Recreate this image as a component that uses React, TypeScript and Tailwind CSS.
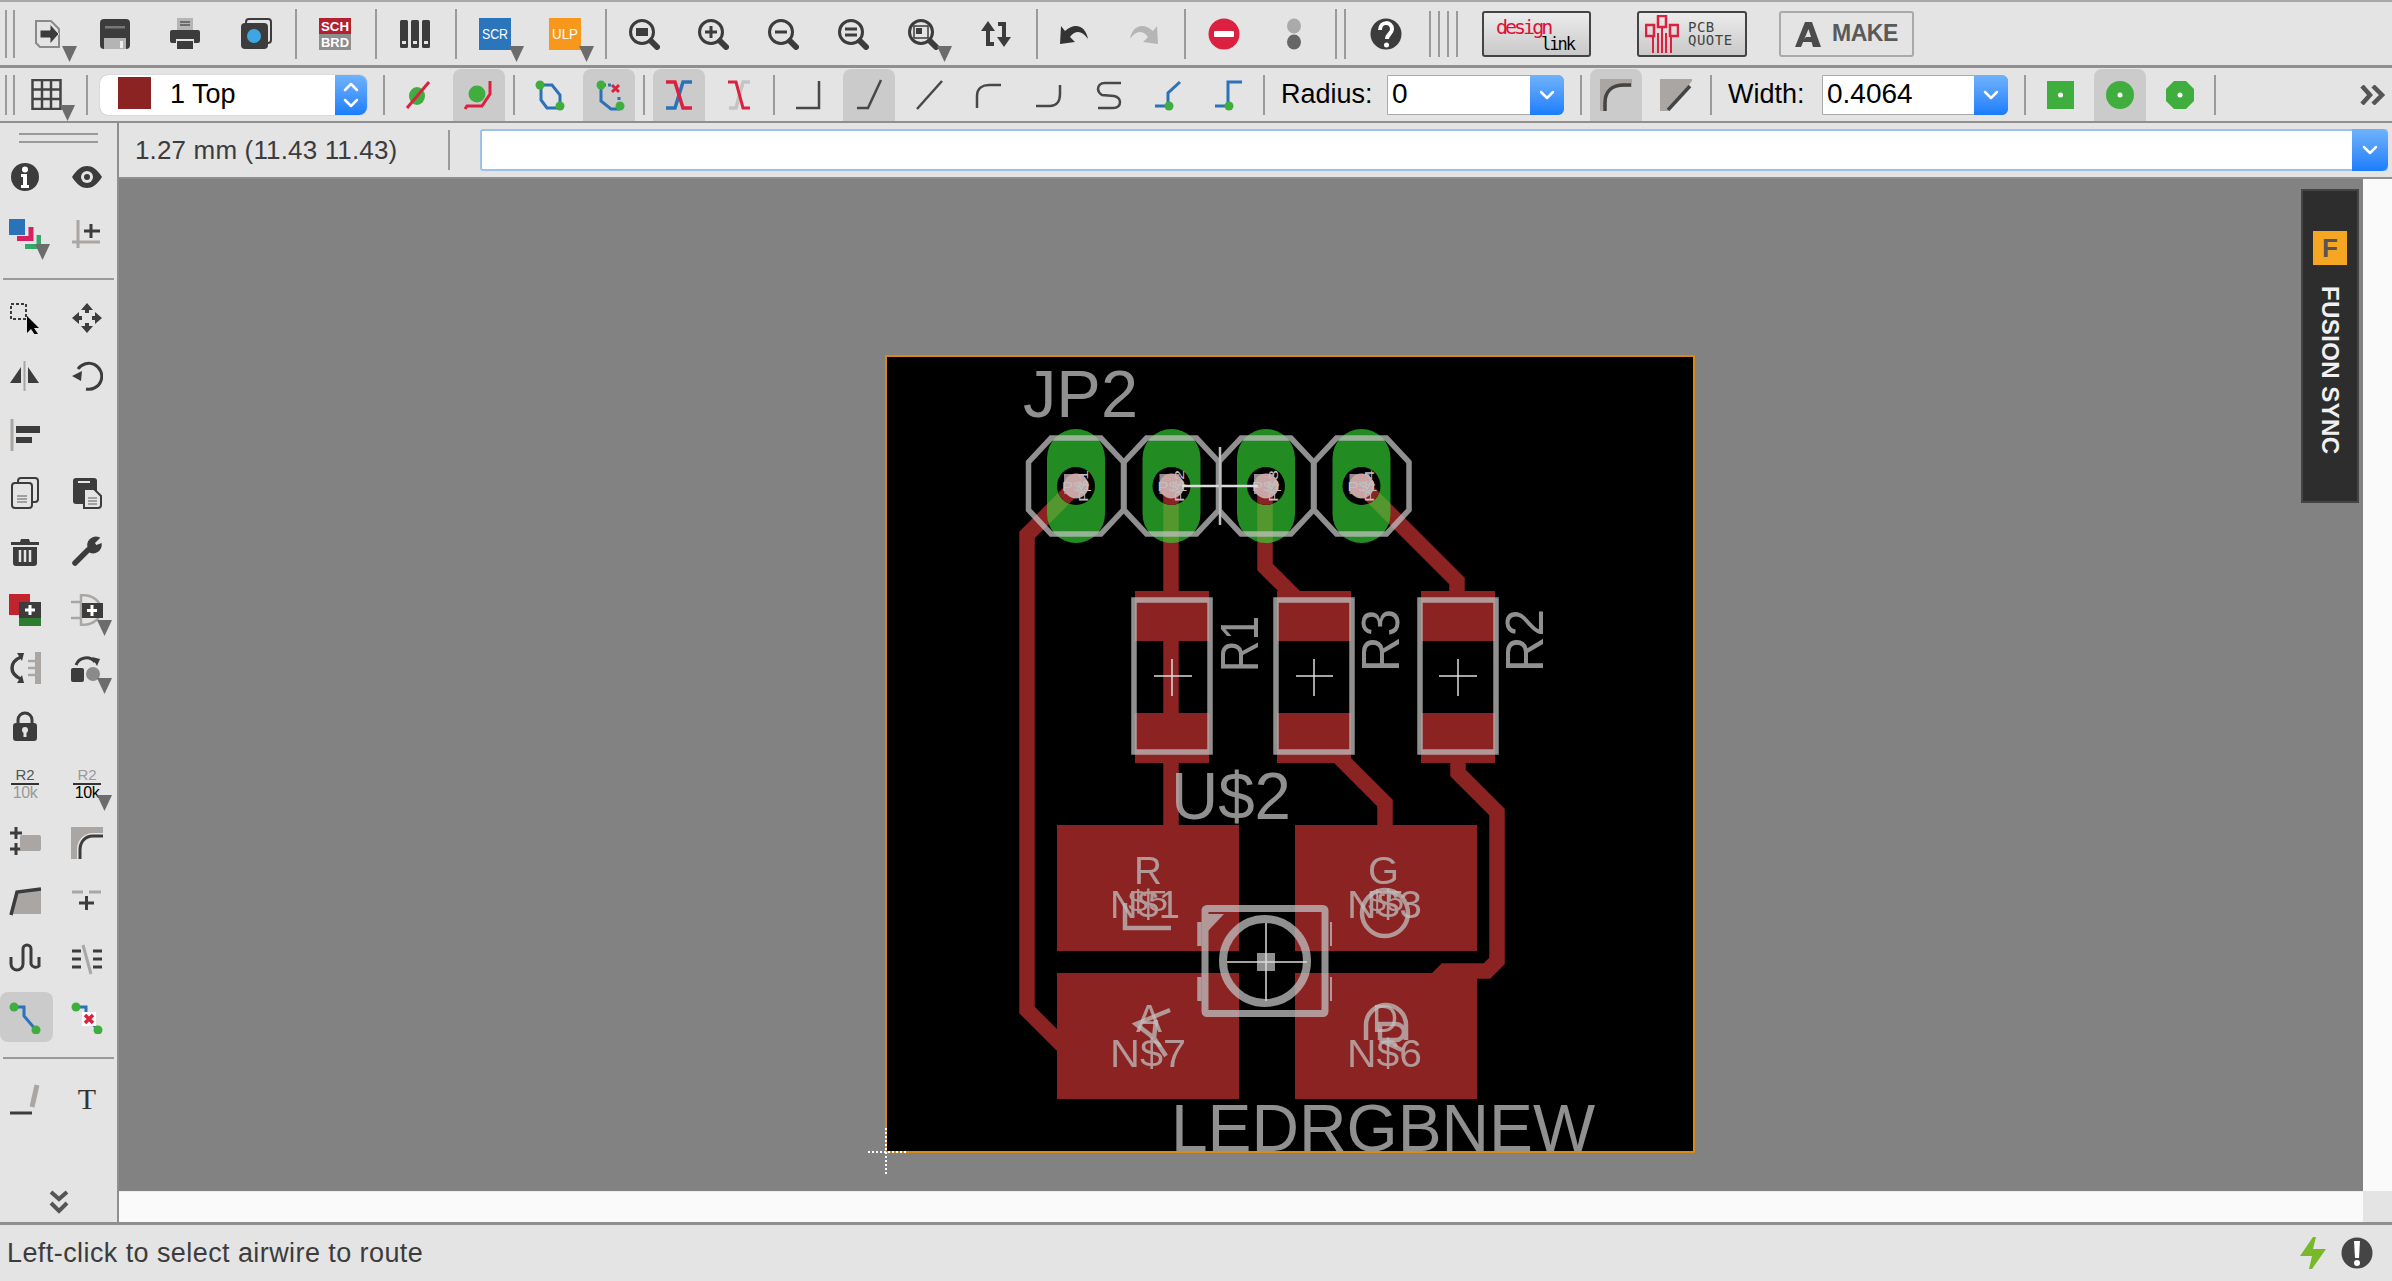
import type { ReactNode } from "react";

const DARK = "#3c3c3c";
const LIGHT = "#aaa6a4";
const BLUE = "#2b73b9";
const RED = "#dc2140";
const GREEN = "#3fae3f";

function Ico({ children, size = 32 }: { children: ReactNode; size?: number }) {
  return (
    <svg width={size} height={size} viewBox="0 0 32 32" fill="none" className="block">
      {children}
    </svg>
  );
}

function Tri({ className = "left-1/2 ml-[14px] bottom-[3px]" }: { className?: string }) {
  return (
    <svg width="15" height="16" viewBox="0 0 15 16" className={`absolute ${className}`}>
      <path d="M0 0h15L7.5 16z" fill="#6c6c6c" />
    </svg>
  );
}

function Sep({ className = "ml-[5px] mr-[3px]" }: { className?: string }) {
  return <div className={`w-[2px] h-[50px] bg-[#9a9a9a] shrink-0 ${className}`} />;
}

function Sep2() {
  return <div className="w-[2px] h-[40px] bg-[#9a9a9a] shrink-0" />;
}

function Top({ w, children, drop }: { w: string; children: ReactNode; drop?: boolean }) {
  return (
    <div className={`relative h-full flex items-center justify-center shrink-0 ${w}`}>
      {children}
      {drop && <Tri />}
    </div>
  );
}

function Btn({ on, children }: { on?: boolean; children: ReactNode }) {
  return (
    <div className={`w-[52px] h-[52px] self-end rounded-t-lg flex items-center justify-center shrink-0 ${on ? "bg-[#cbcbcb]" : ""}`}>
      {children}
    </div>
  );
}

function Lens({ children }: { children?: ReactNode }) {
  return (
    <Ico>
      <circle cx="14" cy="14" r="11.5" stroke={DARK} strokeWidth="3" />
      <path d="M23 23l6 6" stroke={DARK} strokeWidth="6" strokeLinecap="round" />
      {children}
    </Ico>
  );
}

function Chevron({ up }: { up?: boolean }) {
  return (
    <svg width="16" height="10" viewBox="0 0 16 10" fill="none">
      <path d={up ? "M2 8l6-6 6 6" : "M2 2l6 6 6-6"} stroke="#fff" strokeWidth="2.5" strokeLinecap="round" strokeLinejoin="round" />
    </svg>
  );
}

function Route({ d, c = BLUE, dots, children }: { d: string; c?: string; dots?: [number, number][]; children?: ReactNode }) {
  return (
    <Ico>
      <path d={d} stroke={c} strokeWidth="3" strokeLinejoin="miter" />
      {children}
      {dots?.map(([x, y]) => <circle key={`${x}-${y}`} cx={x} cy={y} r="4.5" fill={GREEN} />)}
    </Ico>
  );
}

function Wire({ d, c = "#484848" }: { d: string; c?: string }) {
  return (
    <Ico>
      <path d={d} stroke={c} strokeWidth="2.5" />
    </Ico>
  );
}

function Combo({ w, value, btn = "w-[34px]" }: { w: string; value: string; btn?: string }) {
  return (
    <div className={`${w} h-[40px] flex bg-white border border-[#aaaaaa] rounded-r-md shrink-0`}>
      <div className="flex-1 pl-[4px] text-[28px] leading-[36px] text-black">{value}</div>
      <div className={`${btn} -my-px -mr-px rounded-r-md bg-gradient-to-b from-[#6fb2fb] to-[#187dfb] flex items-center justify-center`}>
        <Chevron />
      </div>
    </div>
  );
}

const leftRows: [ReactNode, ReactNode][] = [
  [
    <Ico><path d="M16 2h0a14 14 0 1 1 0 28 14 14 0 0 1 0-28z" fill={DARK} /><circle cx="16" cy="8.5" r="3" fill="#fff" /><path d="M12 13h6v11h2v3h-8v-3h2v-8h-2z" fill="#fff" /></Ico>,
    <Ico><path d="M1 16C6 8 11 5 16 5s10 3 15 11c-5 8-10 11-15 11S6 24 1 16z" fill={DARK} /><circle cx="16" cy="16" r="6" fill="#e4e4e4" /><circle cx="16" cy="16" r="3" fill={DARK} /></Ico>,
  ],
  [
    <Ico><rect x="0" y="0" width="16" height="16" fill={BLUE} /><path d="M8 19.500h14V8" stroke="#d6205f" strokeWidth="5" /><path d="M16 27.500h14V16" stroke="#35a96a" strokeWidth="5" /></Ico>,
    <Ico><path d="M7 1v28M1 23h28" stroke={LIGHT} strokeWidth="3" /><path d="M13 13h16M20 6v14" stroke={DARK} strokeWidth="3" transform="translate(0 -1)" /></Ico>,
  ],
];

const toolRows: [ReactNode, ReactNode, boolean?, boolean?][] = [
  [
    <Ico><rect x="2" y="2" width="15" height="15" stroke={DARK} strokeWidth="2" strokeDasharray="3 2" /><path d="M18 14v17l4-4 4 6 3-1-4-6h5z" fill="#000" /></Ico>,
    <Ico><path d="M16 1l6 7h-4v3h-4V8h-4zM16 31l6-7h-4v-3h-4v3h-4zM1 16l7-6v4h3v4H8v4zM31 16l-7-6v4h-3v4h3v4z" fill={DARK} /></Ico>,
  ],
  [
    <Ico><path d="M15.5 1v30" stroke={LIGHT} strokeWidth="2" /><path d="M12 7v16H1zM19 7v16h11z" fill={DARK} /></Ico>,
    <Ico><path d="M7 9a13 13 0 1 1 8 20" stroke={DARK} strokeWidth="3" /><path d="M1 16l10-5-1 10z" fill={DARK} /></Ico>,
  ],
  [
    <Ico><path d="M3 0v32" stroke={LIGHT} strokeWidth="3" /><rect x="7" y="7" width="24" height="7" fill={DARK} /><rect x="7" y="18" width="16" height="6" fill={DARK} /></Ico>,
    <div />,
  ],
  [
    <Ico><rect x="9" y="1" width="20" height="24" rx="3" fill="#e4e4e4" stroke={DARK} strokeWidth="2" /><rect x="3" y="6" width="20" height="25" rx="3" fill="#e4e4e4" stroke={DARK} strokeWidth="2" /><path d="M8 19h10M8 22h10M8 25h10" stroke="#8a8a8a" strokeWidth="1.5" /></Ico>,
    <Ico><rect x="2" y="1" width="24" height="26" rx="3" fill={DARK} /><rect x="7" y="4" width="12" height="2" fill="#e4e4e4" /><path d="M13 12h10l7 7v9a3 3 0 0 1-3 3H13z" fill="#e4e4e4" stroke={DARK} strokeWidth="2" /><path d="M17 21h9M17 24h9M17 27h9" stroke="#8a8a8a" strokeWidth="1.5" /></Ico>,
  ],
  [
    <Ico><path d="M2 7h9l1-3h8l1 3h9v3H2z" fill={DARK} /><path d="M4 12h24v16a3 3 0 0 1-3 3H7a3 3 0 0 1-3-3z" fill={DARK} /><path d="M11 15v12M16 15v12M21 15v12" stroke="#e4e4e4" strokeWidth="2.5" /></Ico>,
    <Ico><path d="M4 28L17 15" stroke={DARK} strokeWidth="5.5" strokeLinecap="round" /><path d="M17 11a8 8 0 0 1 11-8l-5 5 2 3 5-2a8 8 0 0 1-11 8z" fill={DARK} stroke={DARK} strokeWidth="1.5" /></Ico>,
  ],
  [
    <Ico><rect x="0" y="0" width="21" height="21" fill="#c0242f" /><rect x="10" y="8" width="22" height="16" fill={DARK} /><rect x="10" y="24" width="22" height="8" fill="#2e7d2e" /><path d="M21 11v10M16 16h10" stroke="#fff" strokeWidth="3" /></Ico>,
    <Ico><path d="M10 1c13 0 20 7 20 15s-7 15-20 15zM0 8h10M0 24h10" stroke={LIGHT} strokeWidth="2.5" /><rect x="11" y="9" width="21" height="15" fill={DARK} /><path d="M21 11v11M16 16.500h10" stroke="#fff" strokeWidth="3" /></Ico>,
    false,
    true,
  ],
  [
    <Ico><path d="M29 0v32" stroke={LIGHT} strokeWidth="6" /><path d="M19 9h8M19 16h8M19 23h8" stroke={LIGHT} strokeWidth="2.5" /><path d="M12 5C5 8 3 12 3 16s2 8 9 11" stroke={DARK} strokeWidth="3.5" /><path d="M8 1h7l-2 8zM8 31h7l-2-8z" fill={DARK} /></Ico>,
    <Ico><rect x="0" y="16" width="13" height="14" rx="2" fill={DARK} /><circle cx="22" cy="22" r="7" fill="#8a8a8a" /><path d="M5 13a11 11 0 0 1 19-3" stroke={DARK} strokeWidth="3" /><path d="M21 5l8 2-3 7z" fill={DARK} /></Ico>,
    false,
    true,
  ],
  [
    <Ico><path d="M9 14V10a7 7 0 0 1 14 0v4" stroke={DARK} strokeWidth="3" /><rect x="4" y="13" width="24" height="18" rx="3" fill={DARK} /><circle cx="16" cy="20" r="3" fill="#e4e4e4" /><rect x="14.500" y="20" width="3" height="7" fill="#e4e4e4" /></Ico>,
    <div />,
  ],
  [
    <div className="w-[34px] text-center"><div className="mx-[3px] pb-[1px] text-[15px] leading-[14px] text-[#555]">R2</div><div className="mx-[3px] border-t-2 border-[#333] text-[16px] leading-[16px] tracking-[-0.5px] whitespace-nowrap text-[#999]"><span className="-mx-1">10k</span></div></div>,
    <div className="w-[34px] text-center"><div className="mx-[3px] pb-[1px] text-[15px] leading-[14px] text-[#999]">R2</div><div className="mx-[3px] border-t-2 border-[#333] text-[16px] leading-[16px] tracking-[-0.5px] whitespace-nowrap text-black"><span className="-mx-1">10k</span></div></div>,
    false,
    true,
  ],
  [
    <Ico><path d="M9 3v12M3 9h12M9 19v12M3 25h12" stroke={DARK} strokeWidth="3" transform="translate(-2 -3)" /><rect x="11" y="8" width="21" height="16" rx="2" fill={LIGHT} /></Ico>,
    <Ico><path d="M0 0h32v6H22C12 6 6 14 6 22v10H0z" fill={LIGHT} /><path d="M9 32v-9c0-8 5-14 13-14h10" stroke={DARK} strokeWidth="3" /></Ico>,
  ],
  [
    <Ico><path d="M8 6l24-3v26H4z" fill={LIGHT} /><path d="M2 30L8 7l24-3" stroke={DARK} strokeWidth="3.5" /></Ico>,
    <Ico><path d="M1 7h11M18 7h12" stroke={LIGHT} strokeWidth="3" /><path d="M15.500 11v14M8 18h15" stroke={DARK} strokeWidth="3" /></Ico>,
  ],
  [
    <Ico><path d="M2 14v7a6 6 0 0 0 12 0V6a4 4 0 0 1 8 0v15a5 5 0 0 0 8 2v-9" stroke={DARK} strokeWidth="3" /></Ico>,
    <Ico><path d="M1 8h9M1 16h9M1 24h9M22 8h9M22 16h9M22 24h9" stroke={DARK} strokeWidth="3" /><path d="M12 2l8 29" stroke={LIGHT} strokeWidth="3" /></Ico>,
  ],
  [
    <Route d="M5 5h10v9l12 14" dots={[[5, 5], [27, 28]]} />,
    <Route d="M5 5h10v9l12 14" dots={[[5, 5], [27, 28]]}><rect x="11" y="10" width="14" height="14" fill="#fff" /><path d="M14 13l8 8M22 13l-8 8" stroke={RED} strokeWidth="3.500" /></Route>,
    true,
  ],
];

function Board() {
  const gray = "#c0c0c0";
  const pads = [1076, 1171.5, 1266, 1361.5];
  const cy = 486;
  const traces = [
    "M1076 486L1027 535V1010L1062 1045",
    "M1171 486V825",
    "M1265 486V567L1300 602",
    "M1362 486L1457 581V600",
    "M1315 733L1385 803V830",
    "M1458 755V773L1497 812V961L1487 971H1445L1420 996",
  ];
  return (
    <svg width="850" height="850" viewBox="866 340 850 850" className="absolute left-[747px] top-[161px]">
      <defs>
        {pads.map((x, i) => (
          <clipPath key={x} id={`hole${i}`}>
            <circle cx={x} cy={cy} r="19" />
          </clipPath>
        ))}
      </defs>
      <rect x="886" y="356" width="808" height="796" fill="#000" />
      <g fill="#8b2323">
        {traces.map((d) => <path key={d} d={d} fill="none" stroke="#8b2323" strokeWidth="15.5" />)}
        <rect x="1135" y="591" width="74" height="50" />
        <rect x="1135" y="713" width="74" height="50" />
        <rect x="1277" y="591" width="74" height="50" />
        <rect x="1277" y="713" width="74" height="50" />
        <rect x="1421" y="591" width="74" height="50" />
        <rect x="1421" y="713" width="74" height="50" />
        <rect x="1057" y="825" width="182" height="126" />
        <rect x="1295" y="825" width="182" height="126" />
        <rect x="1057" y="973" width="182" height="126" />
        <rect x="1295" y="973" width="182" height="126" />
      </g>
      {pads.map((x) => <rect key={x} x={x - 29} y="429" width="58" height="114" rx="29" fill="#35d935" opacity="0.64" />)}
      {pads.map((x, i) => (
        <g key={x}>
          <circle cx={x} cy={cy} r="19" fill="#000" />
          <g clipPath={`url(#hole${i})`}>
            <path d={traces[i]} fill="none" stroke="#8b2323" strokeWidth="15.5" />
          </g>
          <rect x={x - 12} y={cy - 12} width="20" height="20" fill="#8c8c8c" />
          <circle cx={x} cy={cy} r="12.5" fill="#c9a5a5" />
          <text x={x - 14} y={cy + 5} fontSize="13" fill={gray} textLength="30" lengthAdjust="spacingAndGlyphs">P$1</text>
          <text transform={`translate(${x + 12} ${cy + 16}) rotate(-90)`} fontSize="12" fill={gray} textLength="32" lengthAdjust="spacingAndGlyphs">P${i + 1}</text>
        </g>
      ))}
      <g opacity="0.75" fill="none" stroke={gray}>
        {pads.map((x) => (
          <path
            key={x}
            strokeWidth="5.5"
            d={`M${x - 25} ${cy - 48}H${x + 25}L${x + 47.500} ${cy - 24}V${cy + 24}L${x + 25} ${cy + 48}H${x - 25}L${x - 47.500} ${cy + 24}V${cy - 24}z`}
          />
        ))}
        {[1172, 1314, 1458].map((x) => <rect key={x} x={x - 38} y="600" width="76" height="152" strokeWidth="5.500" />)}
        <rect x="1205" y="908.500" width="120" height="105" rx="2" strokeWidth="7" />
        <circle cx="1265" cy="961" r="42" strokeWidth="8" />
        <path d="M1199.500 922v24M1199.500 977v24" strokeWidth="4.500" />
        <path d="M1331 922v24M1331 977v24" strokeWidth="2" />
        <path d="M1208 914h16l-16 17z" fill={gray} stroke="none" />
      </g>
      <g fill="#c0c0c0" opacity="0.75">
        <rect x="1257" y="953" width="18" height="18" />
        <text x="1023" y="416.500" fontSize="66" textLength="115" lengthAdjust="spacingAndGlyphs">JP2</text>
        <text transform="translate(1257.500 672) rotate(-90)" fontSize="53" textLength="56" lengthAdjust="spacingAndGlyphs">R1</text>
        <text transform="translate(1399 672) rotate(-90)" fontSize="53" textLength="63" lengthAdjust="spacingAndGlyphs">R3</text>
        <text transform="translate(1543 672) rotate(-90)" fontSize="53" textLength="63" lengthAdjust="spacingAndGlyphs">R2</text>
        <text x="1171" y="819" fontSize="66" textLength="120" lengthAdjust="spacingAndGlyphs">U$2</text>
        <text x="1171" y="1150.500" fontSize="66" textLength="424" lengthAdjust="spacingAndGlyphs">LEDRGBNEW</text>
        <text x="1134" y="884" fontSize="39" textLength="28" lengthAdjust="spacingAndGlyphs">R</text>
        <text x="1368" y="884" fontSize="39" textLength="31" lengthAdjust="spacingAndGlyphs">G</text>
        <text x="1136" y="1032" fontSize="39" textLength="26" lengthAdjust="spacingAndGlyphs">A</text>
        <text x="1372" y="1032" fontSize="39" textLength="26" lengthAdjust="spacingAndGlyphs">D</text>
        <text x="1110" y="918" fontSize="39" textLength="70" lengthAdjust="spacingAndGlyphs">N$1</text>
        <text x="1347" y="918" fontSize="39" textLength="75" lengthAdjust="spacingAndGlyphs">N$3</text>
        <text x="1110" y="1067" fontSize="39" textLength="76" lengthAdjust="spacingAndGlyphs">N$7</text>
        <text x="1347" y="1067" fontSize="39" textLength="75" lengthAdjust="spacingAndGlyphs">N$6</text>
        <text x="1128" y="911" fontSize="30" textLength="40" lengthAdjust="spacingAndGlyphs">$5</text>
        <text x="1368" y="911" fontSize="30" textLength="36" lengthAdjust="spacingAndGlyphs">$5</text>
      </g>
      <g fill="none" stroke="#c0c0c0" opacity="0.75" strokeWidth="4.500">
        <path d="M1125 903v25h46" />
        <circle cx="1385" cy="913" r="23" />
        <path d="M1170 1010l-34 14 18 14 2-18M1154 1038l12 18" />
        <path d="M1366 1040v-15a20 20 0 0 1 40 0v15M1380 1040v-16h16a8 8 0 0 1 0 16h-16l22 10" />
      </g>
      <g stroke="#dcdcdc">
        <path d="M1227 962h80M1266 923v78" strokeWidth="1.5" />
        <path d="M1182 486h76" strokeWidth="2.5" />
        <path d="M1220 447v78" strokeWidth="2.5" stroke="#bdbdbd" />
        <path d="M1154 676h38M1172 659v37M1296 676h37M1314 659v37M1439 676h38M1458 659v37" strokeWidth="1.5" />
      </g>
      <rect x="886" y="356" width="808" height="796" fill="none" stroke="#d98a15" strokeWidth="2" />
      <path d="M868 1152h38M886 1128v46" stroke="#fff" strokeWidth="2" strokeDasharray="2 2" />
    </svg>
  );
}

export default function App() {
  return (
    <div className="w-[2392px] h-[1281px] flex flex-col bg-[#e4e4e4] overflow-hidden text-[#3c3c3c] font-['Liberation_Sans',Arial,sans-serif]">
      {/* top toolbar */}
      <div className="h-[65px] shrink-0 border-t-2 border-[#a8a8a8] flex items-center">
        <div className="ml-[5px] w-[10px] h-[48px] border-x-2 border-[#9a9a9a] shrink-0" />
        <Top w="w-[66px]" drop>
          <Ico><path d="M4 3h15l8 8v18H8l-4-4z" stroke="#8a8a8a" strokeWidth="2" /><path d="M8 12h10V6l9 10-9 10v-6H8z" fill={DARK} stroke="#e4e4e4" /></Ico>
        </Top>
        <Top w="w-[68px]">
          <Ico><rect x="1" y="1" width="30" height="30" rx="4" fill={DARK} /><rect x="6" y="8" width="20" height="2.500" fill="#777" /><rect x="5" y="20" width="22" height="11" fill="#b4b4b4" /><rect x="21" y="23" width="3" height="7" fill="#eee" /></Ico>
        </Top>
        <Top w="w-[72px]">
          <Ico><rect x="8" y="0" width="16" height="13" fill="#b5b5b5" /><path d="M11 4h10M11 7h10" stroke="#555" strokeWidth="1.500" /><path d="M3 12h26a2 2 0 0 1 2 2v9a2 2 0 0 1-2 2h-4v-4H7v4H3a2 2 0 0 1-2-2v-9a2 2 0 0 1 2-2z" fill={DARK} /><rect x="8" y="23" width="16" height="8" fill={DARK} /></Ico>
        </Top>
        <Top w="w-[69px]">
          <Ico><rect x="6" y="1" width="25" height="24" rx="3" stroke={DARK} strokeWidth="2" /><rect x="1" y="5" width="27" height="26" rx="4" fill={DARK} /><circle cx="14" cy="18" r="7" fill="#3ea6e0" /></Ico>
        </Top>
        <Sep />
        <Top w="w-[70px]">
          <svg width="32" height="32" viewBox="0 0 32 32" className="block">
            <rect width="32" height="16" fill="#b3202f" />
            <rect y="16" width="32" height="16" fill="#8e8e8e" />
            <text x="2" y="13" fontSize="13" fontWeight="700" fill="#fff" textLength="28" lengthAdjust="spacingAndGlyphs">SCH</text>
            <text x="2" y="29" fontSize="13" fontWeight="700" fill="#fff" textLength="28" lengthAdjust="spacingAndGlyphs">BRD</text>
          </svg>
        </Top>
        <Sep />
        <Top w="w-[70px]">
          <Ico>
            {[1, 12, 23].map((x) => (
              <g key={x}>
                <rect x={x} y="2" width="8" height="28" rx="1.500" fill={DARK} />
                <rect x={x + 2} y="23" width="4" height="3" fill="#e4e4e4" />
              </g>
            ))}
          </Ico>
        </Top>
        <Sep />
        <Top w="w-[70px]" drop>
          <svg width="32" height="32" viewBox="0 0 32 32" className="block">
            <rect width="32" height="32" fill="#2a75bb" />
            <text x="3" y="21" fontSize="15" fill="#fff" textLength="26" lengthAdjust="spacingAndGlyphs">SCR</text>
          </svg>
        </Top>
        <Top w="w-[70px]" drop>
          <svg width="32" height="32" viewBox="0 0 32 32" className="block">
            <rect width="32" height="32" fill="#f7981d" />
            <text x="3" y="21" fontSize="15" fill="#fff" textLength="26" lengthAdjust="spacingAndGlyphs">ULP</text>
          </svg>
        </Top>
        <Sep />
        <Top w="w-[68px]"><Lens><rect x="8" y="10" width="12" height="8" fill={DARK} /></Lens></Top>
        <Top w="w-[70px]"><Lens><path d="M14 8v12M8 14h12" stroke={DARK} strokeWidth="3" /></Lens></Top>
        <Top w="w-[70px]"><Lens><path d="M8 14h12" stroke={DARK} strokeWidth="3" /></Lens></Top>
        <Top w="w-[70px]"><Lens><path d="M8 11h12M8 17h12" stroke={DARK} strokeWidth="3" /></Lens></Top>
        <Top w="w-[70px]" drop><Lens><rect x="7" y="8" width="14" height="12" stroke={DARK} strokeWidth="1.500" /><rect x="9" y="10" width="6" height="6" fill={DARK} /></Lens></Top>
        <Top w="w-[76px]">
          <Ico><path d="M14 26H8V11" stroke={DARK} strokeWidth="4" /><path d="M1 13L8 3l7 10z" fill={DARK} /><path d="M18 6h6v15" stroke={DARK} strokeWidth="4" /><path d="M17 19h14l-7 10z" fill={DARK} /></Ico>
        </Top>
        <Sep className="ml-[2px] mr-[1px]" />
        <Top w="w-[70px]">
          <Ico><path d="M3 8L2 26l15-2-5-5C17 12 24 12 30 21 28 9 18 3 7 13z" fill="#333" /></Ico>
        </Top>
        <Top w="w-[70px]">
          <Ico><path d="M29 8l1 18-15-2 5-5C15 12 8 12 2 21 4 9 14 3 25 13z" fill="#b5b5b5" /></Ico>
        </Top>
        <Sep />
        <Top w="w-[70px]">
          <Ico><circle cx="16" cy="16" r="15.500" fill={RED} /><rect x="6" y="13" width="20" height="6" rx="1" fill="#fff" /></Ico>
        </Top>
        <Top w="w-[70px]">
          <Ico><ellipse cx="16" cy="8" rx="7" ry="7.500" fill="#aaa" /><ellipse cx="16" cy="24" rx="7" ry="7.500" fill="#666" /></Ico>
        </Top>
        <Sep className="ml-[6px]" />
        <Sep className="ml-[7px] mr-[5px]" />
        <Top w="w-[70px]">
          <Ico><circle cx="16" cy="16" r="15.500" fill={DARK} /><path d="M10 12c0-9 12-9 12-1 0 5-5 5-5 10" stroke="#fff" strokeWidth="4" /><circle cx="16.500" cy="27" r="2.500" fill="#fff" /></Ico>
        </Top>
        <div className="ml-[8px] w-[11px] h-[46px] border-x-2 border-[#9a9a9a] shrink-0" />
        <div className="ml-[7px] w-[11px] h-[46px] border-x-2 border-[#9a9a9a] shrink-0" />
        <div className="relative ml-[24px] w-[109px] h-[46px] shrink-0 border-2 border-[#444] rounded-[3px] bg-gradient-to-b from-[#ececec] to-[#c9c9c9]">
          <span className="absolute left-[12px] top-[4px] text-[20px] leading-[20px] text-[#e0103a] font-['DejaVu_Sans_Mono',monospace] tracking-[-3px]">design</span>
          <span className="absolute left-[57px] top-[22px] text-[17px] leading-[18px] text-black font-['DejaVu_Sans_Mono',monospace] tracking-[-2px]">link</span>
        </div>
        <div className="ml-[46px] w-[110px] h-[46px] shrink-0 border-2 border-[#444] rounded-[3px] bg-gradient-to-b from-[#ececec] to-[#c9c9c9] flex items-center">
          <svg width="34" height="38" viewBox="0 0 34 38" className="ml-[6px] shrink-0" fill="none">
            <path d="M8 38V22M13 38V18M17 38V12M21 38V18M26 38V22" stroke="#dc2140" strokeWidth="2" />
            <rect x="1" y="10" width="8" height="11" stroke="#dc2140" strokeWidth="2.500" />
            <rect x="13" y="1" width="8" height="11" stroke="#dc2140" strokeWidth="2.500" />
            <rect x="25" y="10" width="8" height="11" stroke="#dc2140" strokeWidth="2.500" />
          </svg>
          <div className="ml-[9px] text-[14px] leading-[13px] tracking-[0.5px] text-[#444] font-['DejaVu_Sans_Mono',monospace]">
            PCB
            <br />
            QUOTE
          </div>
        </div>
        <div className="ml-[32px] w-[135px] h-[46px] shrink-0 border-2 border-[#a9a9a9] rounded-[3px] flex items-center">
          <svg width="28" height="28" viewBox="0 0 28 28" className="ml-[13px] shrink-0">
            <path d="M1 27L11 2h7l9 25h-8l-1.500-5H8l4-5h5l-2.500-8L7 27z" fill="#4c4c4c" />
          </svg>
          <span className="ml-[10px] text-[23px] leading-none font-bold text-[#5a5a5a] tracking-[-0.5px]">MAKE</span>
        </div>
      </div>

      {/* route options toolbar */}
      <div className="h-[56px] shrink-0 border-t-[3px] border-[#8f8f8f] flex items-center">
        <div className="ml-[5px] w-[10px] h-[40px] border-x-2 border-[#9a9a9a] shrink-0" />
        <div className="relative ml-[13px] w-[36px] h-full flex items-center justify-center shrink-0">
          <svg width="31" height="31" viewBox="0 0 31 31" fill="none">
            <rect x="1.500" y="1" width="28" height="29" stroke="#444" strokeWidth="2.500" />
            <path d="M11 1v29M20 1v29M1 10.500h29M1 20h29" stroke="#444" strokeWidth="2.500" />
          </svg>
          <Tri className="left-1/2 ml-[14px] bottom-0" />
        </div>
        <div className="ml-[22px] w-[2px] h-[40px] bg-[#9a9a9a] shrink-0" />
        <div className="ml-[12px] w-[267px] h-[40px] flex bg-white rounded-lg shadow-[0_0_1px_#888] overflow-hidden shrink-0">
          <div className="ml-[18px] mt-[2px] w-[33px] h-[32px] bg-[#8b2323]" />
          <div className="ml-[19px] text-[27px] leading-[38px] text-black">1 Top</div>
          <div className="ml-auto w-[32px] bg-gradient-to-b from-[#6fb2fb] to-[#187dfb] flex flex-col items-center justify-center gap-[6px]">
            <Chevron up />
            <Chevron />
          </div>
        </div>
        <div className="ml-4 flex-1 h-full flex items-center gap-2">
          <Sep2 />
          <Btn><Ico><ellipse cx="14" cy="17" rx="8" ry="9" fill={GREEN} /><path d="M4 29L26 3" stroke={RED} strokeWidth="3" /></Ico></Btn>
          <Btn on><Ico><circle cx="14" cy="15" r="8.500" fill={GREEN} /><path d="M27 2v13l-8 12H4l-2 3" stroke={RED} strokeWidth="3" /></Ico></Btn>
          <Sep2 />
          <Btn><Route d="M8 6h11l8 10v13H14L8 21z" dots={[[7, 6], [27, 27]]} /></Btn>
          <Btn on><Route d="M8 6v16l10 8h9" dots={[[8, 6], [27, 27]]}><path d="M10 6h10M26 18v8" stroke={BLUE} strokeWidth="3" strokeDasharray="3 2" /><path d="M19 6l7 7M26 6l-7 7" stroke={RED} strokeWidth="3" /></Route></Btn>
          <Sep2 />
          <Btn on><Ico><path d="M29 3h-9L12 29H3" stroke={BLUE} strokeWidth="3.500" /><path d="M3 3h9l8 26h9" stroke={RED} strokeWidth="3.500" /></Ico></Btn>
          <Btn><Ico><path d="M27 3h-7L13 29H6" stroke="#c4c4c4" strokeWidth="3.500" /><path d="M5 3h8l7 26h7" stroke={RED} strokeWidth="3" /></Ico></Btn>
          <Sep2 />
          <Btn><Wire d="M26 2v27H3" /></Btn>
          <Btn on><Wire d="M28 1L15 29H4" /></Btn>
          <Btn><Wire d="M29 2L4 30" /></Btn>
          <Btn><Wire d="M4 29v-12C4 9 10 6 16 6h12" /></Btn>
          <Btn><Wire d="M3 27h14c6 0 10-4 10-12V6" /></Btn>
          <Btn><Wire d="M28 4H12C7 4 5 7 5 10c0 2 1 4 4 6l12 1c4 1 6 3 6 6 0 4-3 6-7 6H5" /></Btn>
          <Btn><Route d="M2 27h13V14l12-11" dots={[[16, 27]]} /></Btn>
          <Btn><Route d="M2 27h13V3h14" dots={[[16, 27]]} /></Btn>
          <Sep2 />
          <div className="ml-2 w-[98px] text-[27px] text-black shrink-0">Radius:</div>
          <Combo w="w-[177px]" value="0" />
          <div className="ml-2"><Sep2 /></div>
          <Btn on><Ico><path d="M0 0h32v8H22C12 8 6 14 6 24v8H0z" fill={LIGHT} /><path d="M5 32v-8C5 12 12 6 24 6h7" stroke="#444" strokeWidth="3.500" /></Ico></Btn>
          <Btn><Ico><path d="M0 0h32v2L8 32H0z" fill={LIGHT} /><path d="M8 31L30 7" stroke="#444" strokeWidth="3.500" /></Ico></Btn>
          <Sep2 />
          <div className="ml-2 w-[86px] text-[27px] text-black shrink-0">Width:</div>
          <Combo w="w-[186px]" value="0.4064" />
          <div className="ml-2"><Sep2 /></div>
          <Btn><Ico><rect x="3" y="2" width="27" height="28" fill={GREEN} /><circle cx="16.500" cy="16" r="2.500" fill="#fff" /></Ico></Btn>
          <Btn on><Ico><circle cx="16" cy="16" r="14" fill={GREEN} /><circle cx="16" cy="16" r="2.500" fill="#fff" /></Ico></Btn>
          <Btn><Ico><path d="M10 2h12l8 8v12l-8 8H10l-8-8V10z" fill={GREEN} /><circle cx="16" cy="16" r="2.500" fill="#fff" /></Ico></Btn>
          <Sep2 />
          <svg width="28" height="20" viewBox="0 0 28 20" fill="none" className="ml-auto mr-[4px]">
            <path d="M2 1l8 9-8 9M13 1l9 9-9 9" stroke="#555" strokeWidth="4.500" />
          </svg>
        </div>
      </div>

      {/* left panel + main area */}
      <div className="flex-1 min-h-0 flex border-t-2 border-[#8f8f8f]">
        <div className="w-[119px] shrink-0 border-r-2 border-[#8f8f8f] flex flex-col">
          <div className="mt-[10px] mx-[19px] h-[10px] border-y-2 border-[#9a9a9a] shrink-0" />
          <div className="mt-[5px] grid grid-cols-[50px_50px] gap-x-[12px]">
            {leftRows.map((row, i) => (
              <div key={i} className="contents">
                {row.map((c, j) => (
                  <div key={j} className="relative h-[58px] flex items-center justify-center">
                    {c}
                    {i === 1 && j === 0 && <Tri className="left-[35px] bottom-[4px]" />}
                  </div>
                ))}
              </div>
            ))}
          </div>
          <div className="mt-[14px] mx-[3px] h-[2px] bg-[#9a9a9a] shrink-0" />
          <div className="mt-[9px] grid grid-cols-[50px_50px] gap-x-[12px]">
            {toolRows.map(([a, b, on, drop], i) => (
              <div key={i} className="contents">
                <div className="relative h-[58.300px] flex items-center justify-center">
                  {on && <div className="absolute left-0 w-[53px] top-[3px] bottom-[5px] rounded-lg bg-[#cbcbcb]" />}
                  <div className="relative">{a}</div>
                </div>
                <div className="relative h-[58.300px] flex items-center justify-center">
                  {b}
                  {drop && <Tri className="left-[35px] bottom-[3px]" />}
                </div>
              </div>
            ))}
          </div>
          <div className="mt-[10px] mx-[3px] h-[2px] bg-[#9a9a9a] shrink-0" />
          <div className="mt-[24px] grid grid-cols-[50px_50px] gap-x-[12px] items-center">
            <div className="flex justify-center">
              <svg width="30" height="32" viewBox="0 0 30 32" fill="none">
                <path d="M0 30h22" stroke={DARK} strokeWidth="3" />
                <path d="M22 24L27 2" stroke={LIGHT} strokeWidth="5" />
              </svg>
            </div>
            <div className="text-center text-[30px] leading-none text-[#333] font-['Liberation_Serif',serif]">T</div>
          </div>
          <div className="mt-auto mb-[8px] flex justify-center">
            <svg width="20" height="24" viewBox="0 0 20 24" fill="none">
              <path d="M2 2l8 7 8-7M2 13l8 8 8-8" stroke="#555" strokeWidth="4" />
            </svg>
          </div>
        </div>

        <div className="flex-1 min-w-0 flex flex-col">
          <div className="h-[56px] shrink-0 border-b-2 border-[#8f8f8f] flex items-center">
            <div className="ml-[16px] w-[313px] text-[26px] tracking-[0.15px] text-[#3c3c3c] whitespace-nowrap">1.27 mm (11.43 11.43)</div>
            <Sep2 />
            <div className="ml-[30px] w-[1908px] h-[42px] flex bg-white border-2 border-[#9cc2ec] rounded-[3px]">
              <div className="flex-1" />
              <div className="w-[36px] -my-[2px] -mr-[2px] rounded-r-md bg-gradient-to-b from-[#6fb2fb] to-[#187dfb] flex items-center justify-center">
                <Chevron />
              </div>
            </div>
          </div>
          <div className="flex-1 min-h-0 flex">
            <div className="relative flex-1 bg-[#828282]">
              <Board />
              <div className="absolute left-[2182px] top-[10px] w-[58px] h-[314px] bg-[#2d2d2d] border-2 border-[#444] flex flex-col items-center">
                <div className="mt-[40px] w-[34px] h-[34px] bg-[#f5a623] flex items-center justify-center text-[26px] font-bold text-[#555]">F</div>
                <div className="mt-[21px] text-[24px] leading-none font-bold text-[#f0f0f0] tracking-[0.4px] [writing-mode:vertical-rl] whitespace-nowrap">FUSION SYNC</div>
              </div>
            </div>
            <div className="w-[29px] shrink-0 bg-[#fafafa]" />
          </div>
          <div className="h-[31px] shrink-0 flex">
            <div className="flex-1 bg-[#fafafa] border-t border-[#eeeeee]" />
            <div className="w-[29px] shrink-0" />
          </div>
        </div>
      </div>

      {/* status bar */}
      <div className="h-[59px] shrink-0 border-t-[3px] border-[#8f8f8f] flex items-center">
        <div className="ml-[7px] text-[27px] tracking-[0.42px] text-[#3c3c3c]">Left-click to select airwire to route</div>
        <svg width="26" height="32" viewBox="0 0 26 32" className="ml-auto">
          <path d="M13 0h3l-3 12h13L12 32H9l3-13H0z" fill="#78b82a" />
        </svg>
        <svg width="32" height="32" viewBox="0 0 32 32" className="ml-[15px] mr-[19px]">
          <circle cx="16" cy="16" r="15.500" fill="#454545" />
          <path d="M13 4h6l-1 17h-4z" fill="#fff" />
          <circle cx="16" cy="26" r="3" fill="#fff" />
        </svg>
      </div>
    </div>
  );
}
